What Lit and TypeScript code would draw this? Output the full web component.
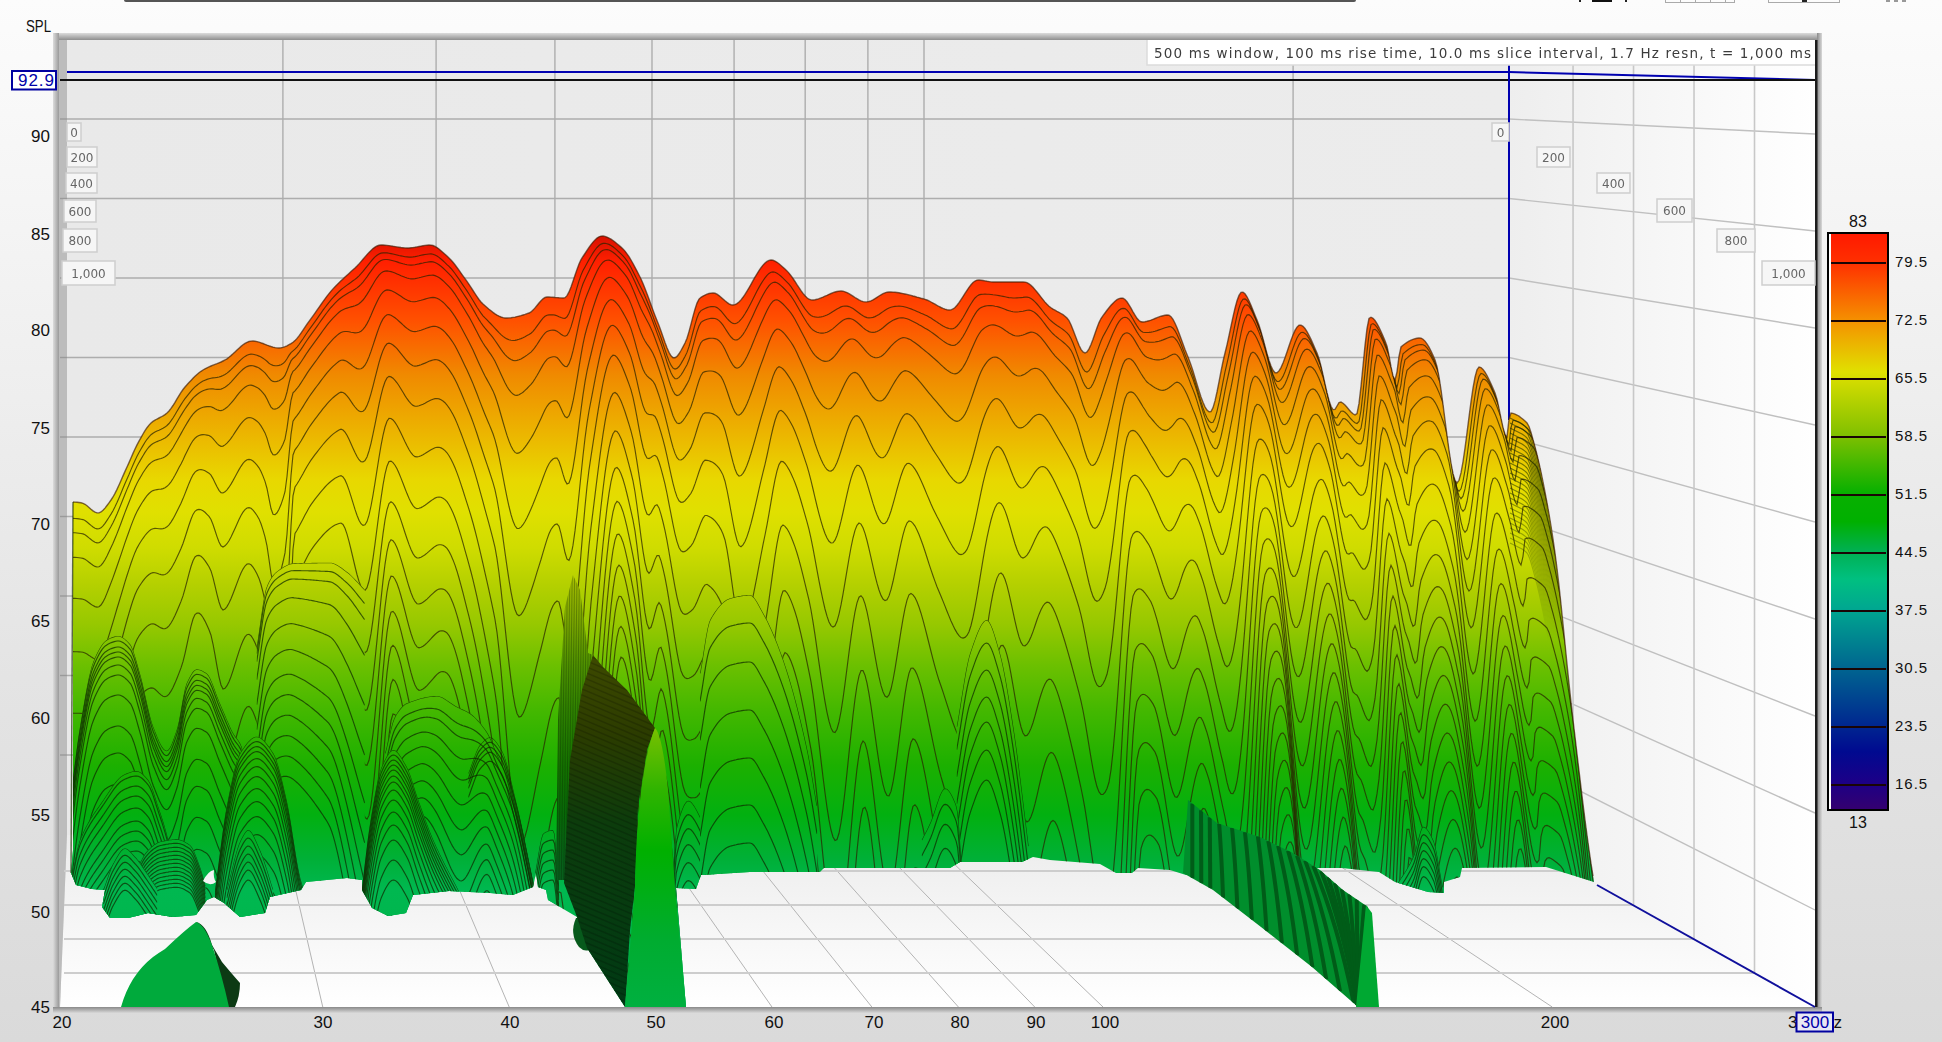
import { LitElement, css, html, svg } from "lit";
import { customElement } from "lit/decorators.js";

type Pt = [number, number];

// ridge of the first slice, read off the reference
const RIDGE: Pt[] = [
  [60, 502], [73, 502], [82, 503], [98, 513], [111, 500], [127, 467], [138, 443], [151, 423], [167, 413],
  [185, 387], [203, 370], [225, 360], [252, 341], [279, 348], [292, 343], [310, 320], [332, 290], [355, 268],
  [381, 245], [408, 248], [430, 245], [448, 257], [466, 280], [484, 305], [506, 318], [529, 313], [547, 297],
  [564, 298], [582, 258], [602, 236], [622, 248], [640, 277], [658, 323], [674, 358], [685, 343], [700, 298],
  [713, 293], [733, 305], [771, 260], [786, 270], [812, 300], [841, 291], [866, 302], [889, 292], [924, 299],
  [950, 310], [978, 280], [993, 282], [1024, 282], [1050, 307], [1067, 318], [1085, 353], [1102, 317],
  [1122, 298], [1142, 322], [1168, 315], [1188, 357], [1210, 412], [1225, 353], [1242, 292], [1257, 320],
  [1276, 373], [1300, 325], [1317, 353], [1334, 410], [1340, 402], [1356, 415], [1370, 317], [1386, 343],
  [1395, 380], [1401, 347], [1420, 338], [1435, 360], [1457, 483], [1479, 367], [1495, 393], [1507, 437],
  [1510, 413], [1527, 423], [1535, 447], [1544, 487], [1555, 553], [1573, 720], [1594, 882], [1620, 1000],
];

// how fast each frequency falls away from the ridge
const DECAY: Pt[] = [
  [60, 2], [73, 2.05], [98, 2], [118, 1.6], [136, 1.4], [150, 1.45], [166, 1.55], [180, 1.5], [194, 1.3],
  [208, 1.45], [222, 1.8], [245, 1.6], [256, 1.7], [264, 1.9], [272, 2.3], [283, 2], [292, 1.05], [310, 1],
  [337, 1.05], [362, 1.45], [386, 0.95], [413, 1.15], [440, 1.1], [462, 1.25], [490, 1.7], [515, 2.9], [535, 2.5],
  [553, 2.2], [564, 2.55], [585, 1.5], [609, 0.85], [625, 1], [640, 1.3], [652, 1.1], [675, 1.4], [690, 1.5],
  [717, 1.75], [735, 2.35], [758, 1.9], [775, 1.45], [800, 1.7], [826, 2.4], [852, 1.65], [878, 2.2], [901, 1.65],
  [930, 2.1], [958, 2.4], [990, 1.6], [1013, 2], [1039, 1.7], [1070, 2.1], [1096, 2.5], [1120, 1.3],
  [1136, 1.25], [1159, 1.55], [1185, 1.2], [1205, 1.3], [1220, 1.5], [1245, 0.8], [1254, 0.75], [1283, 1.15],
  [1310, 0.8], [1335, 1.05], [1349, 1.15], [1369, 0.8], [1385, 0.95], [1415, 0.8], [1440, 0.95], [1457, 1.05],
  [1481, 0.8], [1500, 0.95], [1515, 0.9], [1620, 0.9],
];

const FLOOR_EDGE: Pt[] = [
  [71, 873], [76, 885], [92, 889], [105, 890], [102, 907], [110, 918], [128, 918], [148, 913], [173, 917],
  [196, 915], [207, 900], [214, 897], [224, 903], [240, 917], [265, 913], [270, 897], [301, 890], [306, 882],
  [347, 878], [362, 880], [362, 890], [372, 908], [388, 916], [406, 913], [413, 895], [449, 891], [490, 893],
  [513, 895], [533, 887], [536, 873], [538, 887], [546, 890], [548, 900], [577, 917], [587, 948], [625, 1007],
  [686, 1007], [676, 888], [696, 889], [701, 875], [750, 872], [820, 872], [824, 868], [950, 868], [960, 862],
  [1022, 862], [1033, 857], [1050, 860], [1100, 864], [1116, 873], [1132, 873], [1138, 868], [1170, 870],
  [1186, 875], [1315, 868], [1342, 868], [1379, 872], [1395, 882], [1428, 892], [1444, 893], [1444, 882],
  [1460, 877], [1462, 868], [1546, 867], [1594, 882],
];

const dropTable = () => {
  const d = [0, 8, 15, 27, 47, 73, 103, 138, 182, 227, 270, 310, 348, 385];
  while (d.length < 36) d.push(d[d.length - 1] + 36);
  return d;
};

// monotone cubic through the points, so peaks stay round and nothing overshoots
function curve(pts: Pt[]) {
  const n = pts.length;
  const slope = (i: number) => (pts[i + 1][1] - pts[i][1]) / (pts[i + 1][0] - pts[i][0]);
  const tan = pts.map((_, i) => {
    if (i === 0) return slope(0);
    if (i === n - 1) return slope(n - 2);
    const a = slope(i - 1);
    const b = slope(i);
    return a * b <= 0 ? 0 : (2 * a * b) / (a + b);
  });
  return (x: number) => {
    if (x <= pts[0][0]) return pts[0][1];
    if (x >= pts[n - 1][0]) return pts[n - 1][1];
    let i = 0;
    while (pts[i + 1][0] < x) i++;
    const h = pts[i + 1][0] - pts[i][0];
    const t = (x - pts[i][0]) / h;
    const t2 = t * t;
    const t3 = t2 * t;
    return (
      (2 * t3 - 3 * t2 + 1) * pts[i][1] +
      (t3 - 2 * t2 + t) * h * tan[i] +
      (-2 * t3 + 3 * t2) * pts[i + 1][1] +
      (t3 - t2) * h * tan[i + 1]
    );
  };
}

const poly = (pts: Pt[]) => "M" + pts.map((p) => `${p[0].toFixed(1)} ${p[1].toFixed(1)}`).join("L");

// crop coordinates to page coordinates
const crop = (ox: number, oy: number, pts: Pt[]): Pt[] => pts.map((p) => [ox + p[0] / 3, oy + p[1] / 3]);

interface Mound {
  top: Pt[];
  drops: number[];
  fill?: boolean;
  rate?: Pt[];
  fade?: boolean;
  opacity?: number;
}

const CROP_A = (pts: Pt[]) => crop(60, 540, pts);
const CROP_B = (pts: Pt[]) => crop(560, 540, pts);
const CROP_C = (pts: Pt[]) => crop(1060, 540, pts);

const slabDrops = Array.from({ length: 26 }, (_, i) => (i + 1) * 5);

const MOUNDS: Mound[] = [
  // shoulder that leans to the right above 30 Hz
  {
    top: CROP_A([[590, 320], [620, 140], [650, 95], [700, 70], [810, 68], [860, 95], [915, 150]]),
    drops: [0, 7, 15, 33, 58, 83, 107, 127, 147, 167, 187, 207],
    rate: [[260, 1], [273, 1], [327, 1.25], [365, 2]],
  },
  {
    top: CROP_A([[28, 800], [60, 560], [100, 365], [140, 300], [175, 288], [210, 312], [240, 400], [280, 560], [320, 632], [350, 570], [380, 430], [410, 388], [440, 400], [480, 490], [520, 580], [545, 620], [570, 800], [590, 1050]]),
    drops: [0, 5, 11, 16, 21, 29, 39, 59, 90, 117, 148, 180, 215],
  },
  {
    top: CROP_A([[975, 640], [1005, 530], [1040, 490], [1130, 468], [1190, 500], [1230, 520], [1280, 575], [1310, 640], [1360, 760], [1425, 1050]]),
    drops: [0, 13, 23, 40, 57, 77, 97, 117, 138, 157, 175, 195],
    rate: [[385, 1], [420, 0.85], [460, 1.25], [490, 0.8], [535, 1]],
  },
  { top: CROP_A([[1225, 700], [1260, 615], [1290, 592], [1325, 630], [1370, 790], [1425, 1050]]), drops: [0, 5, 10, 15, 24], fill: false },
  { top: CROP_A([[905, 1050], [930, 850], [965, 680], [1000, 630], [1040, 680], [1075, 780], [1120, 900], [1200, 1060]]), drops: [0, 5, 10, 15, 20, 26, 32, 40, 50, 62, 75, 90, 110, 130] },
  { top: CROP_A([[465, 1050], [500, 800], [540, 640], [590, 590], [640, 640], [680, 780], [720, 1010], [735, 1060]]), drops: [0, 5, 10, 15, 22, 30, 40, 52, 65, 80, 98, 118, 140] },
  { top: CROP_A([[500, 1050], [540, 905], [565, 870], [600, 930], [640, 1050]]), drops: [0, 8, 16, 24, 32, 40, 50] },
  { top: CROP_A([[1425, 1000], [1450, 880], [1480, 870], [1500, 1050]]), drops: [0, 10, 20, 30, 40, 50] },
  { top: CROP_A([[28, 1050], [60, 900], [130, 780], [190, 705], [230, 693], [265, 720], [295, 800], [325, 900], [350, 1050]]), drops: [0, 5, 15, 25, 37, 50, 60, 70, 80, 90, 100, 108, 115] },
  { top: CROP_A([[225, 1000], [260, 935], [300, 905], [350, 898], [390, 915], [420, 980], [440, 1050]]), drops: [0, 4, 8, 12, 16, 20, 24, 28, 32, 36, 40, 44, 48] },
  { top: CROP_A([[130, 1050], [160, 970], [195, 925], [225, 950], [265, 1005], [295, 1050]]), drops: [0, 7, 14, 21, 28, 35, 42] },
  { top: CROP_B([[335, 1050], [350, 860], [385, 782], [420, 830], [470, 1000], [480, 1050]]), drops: [0, 14, 28, 44, 62, 80] },
  // nested arches near 70 Hz and 100 Hz
  { top: CROP_B([[420, 400], [450, 240], [510, 175], [570, 165], [610, 220], [670, 360], [740, 620], [775, 820]]), drops: [0, 28, 67, 115, 163, 210, 248] },
  { top: CROP_B([[1190, 560], [1230, 340], [1280, 240], [1320, 340], [1360, 560], [1410, 950]]), drops: [0, 23, 50, 77, 102, 130, 160] },
  { top: CROP_B([[1085, 900], [1110, 850], [1155, 745], [1190, 800], [1210, 1050]]), drops: [0, 16, 36, 60, 85, 110, 130] },
  { top: CROP_C([[1000, 1050], [1060, 950], [1090, 860], [1120, 900], [1150, 1050]]), drops: [0, 8, 16, 24, 32, 40, 50] },
  // steep last block at the top of the range, dark where its slices crowd together
  { top: [[1510, 413], [1518, 417], [1527, 423], [1535, 447], [1544, 487], [1555, 553], [1573, 720]], drops: slabDrops, fill: false, fade: true, opacity: 0.55 },
];

const SURFACE_STOPS: [number, string][] = [
  [236, "#d81000"], [262, "#ff2000"], [320, "#ff5000"], [375, "#f08a00"], [432, "#ecb400"], [480, "#e8d800"],
  [512, "#e0e000"], [548, "#cfdc00"], [585, "#b4d000"], [625, "#96c800"], [665, "#6cc000"], [710, "#44b800"],
  [765, "#1cb000"], [815, "#02b010"], [860, "#00b038"], [890, "#00b850"], [1007, "#00b048"],
];

const LEGEND_STOPS = [
  "#ff1a00 0%", "#ff3000 5%", "#f59000 15%", "#e0e000 24%", "#80c000 35%", "#08b000 45%", "#00b000 50%",
  "#00b050 55%", "#00c080 60%", "#00a890 65%", "#006890 75%", "#002a90 85%", "#000a90 90%", "#1a0088 95%",
  "#340070 100%",
];

const FREQS = [20, 30, 40, 50, 60, 70, 80, 90, 100, 200, 300];
const LEFT = 67;
const BACK_RIGHT = 1509;
const RIGHT = 1815;
const BACK_FLOOR = 835;
const BOTTOM = 1007;
const backX = (f: number) => LEFT + (1442 * Math.log10(f / 20)) / Math.log10(15);
const frontX = (f: number) => 60 + (1755 * Math.log10(f / 20)) / Math.log10(15);

const DB = [90, 85, 80, 75, 70, 65, 60, 55, 50];
const backY = (v: number) => 119 + (90 - v) * 15.9;
const frontY = (v: number) => BOTTOM - (v - 45) * 19.4;

const AXIS_Y: [string, number][] = [
  ["90", 136], ["85", 234], ["80", 330], ["75", 428], ["70", 524], ["65", 621], ["60", 718], ["55", 815], ["50", 912], ["45", 1007],
];
const AXIS_X: [string, number][] = [
  ["20", 62], ["30", 323], ["40", 510], ["50", 656], ["60", 774], ["70", 874], ["80", 960], ["90", 1036], ["100", 1105], ["200", 1555],
];

const DEPTH_LEFT: [string, number, number, number, number][] = [
  ["0", 67, 123, 14, 18], ["200", 67, 147, 30, 20], ["400", 66, 173, 31, 20], ["600", 64, 200, 32, 22],
  ["800", 63, 229, 34, 23], ["1,000", 62, 261, 53, 24],
];
const DEPTH_RIGHT: [string, number, number, number, number][] = [
  ["0", 1492, 123, 17, 18], ["200", 1537, 147, 33, 20], ["400", 1597, 173, 33, 20], ["600", 1657, 199, 35, 23],
  ["800", 1717, 229, 38, 23], ["1,000", 1762, 261, 53, 24],
];

const LEGEND_TICKS = ["79.5", "72.5", "65.5", "58.5", "51.5", "44.5", "37.5", "30.5", "23.5", "16.5"];

@customElement("app-root")
export class AppRoot extends LitElement {
  static styles = css`
    :host {
      display: flex;
      flex-direction: column;
      width: 1942px;
      height: 1042px;
      overflow: hidden;
      background: linear-gradient(180deg, #fcfcfc 0%, #f4f4f4 22%, #e4e4e4 65%, #dadada 100%);
      font-family: "Liberation Sans", Arial, sans-serif;
    }

    .strip {
      display: flex;
      height: 4px;
      flex: none;
      overflow: hidden;
    }
    .strip .bar {
      width: 1232px;
      height: 2px;
      margin-left: 124px;
      background: #555;
      border-radius: 0 0 3px 3px;
    }
    .strip .mark {
      width: 2px;
      height: 2px;
      margin-left: 223px;
      background: #222;
    }
    .strip .knob {
      width: 20px;
      height: 2px;
      margin-left: 11px;
      background: #111;
    }
    .strip .mark.end {
      margin-left: 13px;
    }
    .strip .seg {
      display: flex;
      width: 70px;
      height: 3px;
      margin-left: 38px;
      border: 1px solid #aaa;
      border-top: 0;
      box-sizing: border-box;
    }
    .strip .seg i {
      width: 14px;
      border-right: 1px solid #aaa;
    }
    .strip .select {
      display: flex;
      justify-content: center;
      width: 72px;
      height: 3px;
      margin-left: 33px;
      border: 1px solid #aaa;
      border-top: 0;
      box-sizing: border-box;
    }
    .strip .select i {
      width: 5px;
      height: 2px;
      background: #222;
    }
    .strip .gear {
      width: 22px;
      height: 2px;
      margin-left: 46px;
      background: repeating-linear-gradient(90deg, #999 0 4px, transparent 4px 8px);
    }

    .main {
      display: grid;
      grid-template-columns: 1827px 115px;
      flex: 1;
    }

    svg {
      display: block;
      overflow: visible;
    }
    .soft {
      filter: blur(0.45px);
    }
    text {
      font-family: "Liberation Sans", Arial, sans-serif;
      font-size: 17px;
      fill: #111;
    }
    .spl {
      font-size: 16px;
    }
    .title {
      font-family: "DejaVu Sans", sans-serif;
      font-size: 13.5px;
      fill: #3c3c3c;
    }
    .depth {
      font-family: "DejaVu Sans", sans-serif;
      font-size: 12px;
      fill: #666;
    }
    .cursor {
      fill: #0000a8;
    }

    .legend {
      display: flex;
      flex-direction: column;
      padding-top: 208px;
      font-size: 16px;
      color: #111;
    }
    .limit {
      width: 62px;
      height: 20px;
      line-height: 20px;
      text-align: center;
    }
    .scale {
      display: flex;
    }
    .ramp {
      display: flex;
      flex-direction: column;
      width: 62px;
      height: 579px;
      box-sizing: border-box;
      border: 2px solid #000;
      box-shadow: inset 2px 0 0 #fff;
    }
    .ramp span {
      display: block;
      height: 58px;
      margin: 0 1px 0 2px;
      box-sizing: border-box;
      border-bottom: 2px solid #1a0505;
      flex: none;
    }
    .ramp span.first {
      height: 30px;
    }
    .values {
      display: flex;
      flex-direction: column;
      padding: 1px 0 0 6px;
      letter-spacing: 1px;
      font-size: 15px;
    }
    .values span {
      height: 58px;
      line-height: 58px;
      flex: none;
    }
  `;

  private surfaceDefs() {
    const top = 230;
    const span = BOTTOM - top;
    return svg`
      <linearGradient id="surface" gradientUnits="userSpaceOnUse" x1="0" y1="${top}" x2="0" y2="${BOTTOM}">
        ${SURFACE_STOPS.map(([y, c]) => svg`<stop offset="${(y - top) / span}" stop-color="${c}"></stop>`)}
      </linearGradient>
      <linearGradient id="backwall" x1="0" y1="0" x2="1" y2="0">
        <stop offset="0" stop-color="#e9e9e9"></stop>
        <stop offset="1" stop-color="#ececec"></stop>
      </linearGradient>
      <linearGradient id="sidewall" x1="0" y1="0" x2="1" y2="0">
        <stop offset="0" stop-color="#eeeeee"></stop>
        <stop offset="1" stop-color="#ffffff"></stop>
      </linearGradient>
      <linearGradient id="floor" x1="0" y1="0" x2="0" y2="1">
        <stop offset="0" stop-color="#ececec"></stop>
        <stop offset="1" stop-color="#ffffff"></stop>
      </linearGradient>
      <linearGradient id="frameTop" x1="0" y1="0" x2="0" y2="1">
        <stop offset="0" stop-color="#dcdcdc"></stop>
        <stop offset="1" stop-color="#8e8e8e"></stop>
      </linearGradient>
      <linearGradient id="frameLeft" x1="0" y1="0" x2="1" y2="0">
        <stop offset="0" stop-color="#dcdcdc"></stop>
        <stop offset="1" stop-color="#9a9a9a"></stop>
      </linearGradient>
      <linearGradient id="frameRight" x1="0" y1="0" x2="1" y2="0">
        <stop offset="0" stop-color="#8a8a8a"></stop>
        <stop offset="1" stop-color="#d8d8d8"></stop>
      </linearGradient>
      <linearGradient id="frameBottom" x1="0" y1="0" x2="0" y2="1">
        <stop offset="0" stop-color="#8a8a8a"></stop>
        <stop offset="1" stop-color="#d8d8d8"></stop>
      </linearGradient>
      <linearGradient id="slab" gradientUnits="userSpaceOnUse" x1="0" y1="655" x2="0" y2="1007">
        <stop offset="0" stop-color="#3e4a00"></stop>
        <stop offset="0.22" stop-color="#2c3c00"></stop>
        <stop offset="0.48" stop-color="#0c3c0c"></stop>
        <stop offset="1" stop-color="#003a14"></stop>
      </linearGradient>
      <linearGradient id="spireShade" gradientUnits="userSpaceOnUse" x1="0" y1="575" x2="0" y2="880">
        <stop offset="0" stop-color="#0c2400" stop-opacity="0.12"></stop>
        <stop offset="0.3" stop-color="#0c2400" stop-opacity="0.3"></stop>
        <stop offset="1" stop-color="#0c2400" stop-opacity="0.6"></stop>
      </linearGradient>
      <linearGradient id="lime" gradientUnits="userSpaceOnUse" x1="0" y1="728" x2="0" y2="1007">
        <stop offset="0" stop-color="#78c000"></stop>
        <stop offset="0.22" stop-color="#30b400"></stop>
        <stop offset="0.44" stop-color="#00b000"></stop>
        <stop offset="0.76" stop-color="#00ac30"></stop>
        <stop offset="1" stop-color="#00b040"></stop>
      </linearGradient>
      <linearGradient id="fadeRamp" gradientUnits="userSpaceOnUse" x1="0" y1="470" x2="0" y2="640">
        <stop offset="0" stop-color="#fff"></stop>
        <stop offset="1" stop-color="#000"></stop>
      </linearGradient>
      <mask id="fadeOut" maskUnits="userSpaceOnUse" x="1480" y="380" width="140" height="300">
        <rect x="1480" y="380" width="140" height="300" fill="url(#fadeRamp)"></rect>
      </mask>
    `;
  }

  private room() {
    const floorRows = [871, 905, 939, 973];
    const blueX = (y: number) => BACK_RIGHT + ((y - BACK_FLOOR) / (BOTTOM - BACK_FLOOR)) * (RIGHT - BACK_RIGHT);
    return svg`
      <rect x="53" y="33" width="1769" height="7" fill="url(#frameTop)"></rect>
      <rect x="53" y="33" width="6" height="980" fill="url(#frameLeft)"></rect>
      <rect x="1817" y="33" width="5" height="980" fill="url(#frameRight)"></rect>
      <rect x="53" y="1007" width="1769" height="6" fill="url(#frameBottom)"></rect>

      <path d="M${LEFT} 40H${BACK_RIGHT}V${BACK_FLOOR}H${LEFT}Z" fill="url(#backwall)"></path>
      <path d="M${BACK_RIGHT} 40H${RIGHT}V${BOTTOM}L${BACK_RIGHT} ${BACK_FLOOR}Z" fill="url(#sidewall)"></path>
      <path d="M${LEFT} ${BACK_FLOOR}H${BACK_RIGHT}L${RIGHT} ${BOTTOM}H60Z" fill="url(#floor)"></path>
      <path d="M59 40H${LEFT}V${BACK_FLOOR}L60 ${BOTTOM}H59Z" fill="#bcbcbc"></path>

      ${DB.map((v) => svg`
        <path d="M${LEFT} ${backY(v)}H${BACK_RIGHT}" stroke="#adadad" stroke-width="1.6"></path>
        <path d="M${BACK_RIGHT} ${backY(v)}L${RIGHT} ${frontY(v)}" stroke="#c0c0c0" stroke-width="1.4"></path>
        <path d="M60 ${backY(v)}H${LEFT}" stroke="#9a9a9a" stroke-width="1.4"></path>
      `)}
      ${FREQS.slice(1, -1).map((f) => svg`
        <path d="M${backX(f)} 40V${BACK_FLOOR}" stroke="#adadad" stroke-width="1.4"></path>
        <path d="M${backX(f)} ${BACK_FLOOR}L${frontX(f)} ${BOTTOM}" stroke="#b4b4b4" stroke-width="1"></path>
      `)}
      ${floorRows.map((y) => svg`
        <path d="M64 ${y}H${blueX(y)}" stroke="#cdcdcd" stroke-width="2"></path>
        <path d="M${blueX(y)} 65V${y}" stroke="#c8c8c8" stroke-width="1.6"></path>
      `)}

      <path d="M${LEFT} 72H${BACK_RIGHT}L${RIGHT} 80" stroke="#0000b0" stroke-width="2" fill="none"></path>
      <path d="M60 80H${RIGHT}" stroke="#111" stroke-width="2"></path>
      <path d="M${BACK_RIGHT} 65V420" stroke="#0000b0" stroke-width="2"></path>
      <path d="M1597 885L${RIGHT} ${BOTTOM}" stroke="#10109c" stroke-width="2"></path>
      <rect x="1815" y="40" width="2.5" height="967" fill="#1c1c1c"></rect>

      <rect x="1147" y="40" width="668" height="25" fill="#ffffff"></rect>
      <path d="M1147 40V65H1815" fill="none" stroke="#dcdcdc" stroke-width="1.5"></path>
      <text class="title soft" x="1154" y="57.5" textLength="657" lengthAdjust="spacing">500 ms window, 100 ms rise time, 10.0 ms slice interval, 1.7 Hz resn, t = 1,000 ms</text>

      ${[...DEPTH_LEFT, ...DEPTH_RIGHT].map(([t, x, y, w, h]) => svg`
        <rect x="${x}" y="${y}" width="${w}" height="${h}" fill="#f6f6f6" stroke="#cecece" stroke-width="1.5"></rect>
        <text class="depth soft" x="${x + w / 2}" y="${y + h / 2 + 4.5}" text-anchor="middle">${t}</text>
      `)}
    `;
  }

  private surface() {
    const ridge = curve(RIDGE);
    const decay = curve(DECAY);
    const drops = dropTable();

    const outline: Pt[] = [];
    for (let x = 73; x <= 1594; x += 2) outline.push([x, ridge(x)]);
    const silhouette = poly([...outline, ...[...FLOOR_EDGE].reverse(), [73, 850]]) + "Z";

    const lines = drops.slice(1).map((d, i) => {
      // later slices sit further into the room, so they spread to the right
      const depth = (0.25 * (i + 1)) / drops.length;
      const pts: Pt[] = [];
      for (let x = 71; x <= 1610; x += 2) {
        const u = LEFT + (x - LEFT) / (1 + 0.212 * depth);
        pts.push([x, Math.min(1015, ridge(u) + d * decay(u))]);
      }
      return poly(pts);
    });

    const mounds = MOUNDS.map((m, idx) => {
      const top = curve(m.top);
      const rate = m.rate ? curve(m.rate) : () => 1;
      const x0 = m.top[0][0];
      const x1 = m.top[m.top.length - 1][0];
      const run = (d: number) => {
        const pts: Pt[] = [];
        for (let x = x0; x <= x1; x += 1.5) pts.push([x, top(x) + d * rate(x)]);
        return pts;
      };
      const area = poly([...run(0), [x1, 1020], [x0, 1020]]) + "Z";
      return svg`
        <clipPath id="mound${idx}"><path d="${area}"></path></clipPath>
        ${m.fill === false ? null : svg`<path d="${area}" fill="url(#surface)"></path>`}
        <g mask="${m.fade ? "url(#fadeOut)" : "none"}">
          <g clip-path="url(#mound${idx})">
            ${m.drops.map((d) => svg`<path d="${poly(run(d))}" fill="none" stroke="#0f2a00" stroke-opacity="${m.opacity ?? 0.72}" stroke-width="1.15"></path>`)}
          </g>
        </g>
      `;
    });

    return svg`
      <clipPath id="body"><path d="${silhouette}"></path></clipPath>
      <g class="soft">
        <path d="${silhouette}" fill="url(#surface)"></path>
        <g clip-path="url(#body)">
          ${lines.map((d) => svg`<path d="${d}" fill="none" stroke="#2a2400" stroke-opacity="0.72" stroke-width="1.15"></path>`)}
          ${mounds}
        </g>
        <path d="${poly(outline)}" fill="none" stroke="#3a1800" stroke-opacity="0.65" stroke-width="1.4"></path>
        <path d="M73 502L71 873" stroke="#1c3000" stroke-opacity="0.7" stroke-width="1.4"></path>
        <path d="M203 881Q208 871 214 870Q213 878 216 882Q210 887 203 881Z" fill="#f4f4f4"></path>
        ${this.leftSlab()}
        ${this.rightSlab()}
        ${this.blob()}
      </g>
    `;
  }

  // dark wall behind the bright ridge near 50 Hz
  private leftSlab() {
    const spire: Pt[] = [[556, 880], [558, 720], [565, 607], [573, 575], [580, 590], [588, 653], [593, 655], [590, 720], [582, 880]];
    const body: Pt[] = [[564, 883], [570, 760], [582, 690], [593, 655], [603, 667], [627, 690], [655, 728], [647, 750], [638, 807], [635, 887], [630, 930], [625, 1007], [587, 948], [577, 917]];
    const ticks: number[] = [];
    for (let x = 558; x < 592; x += 2.4) ticks.push(x);
    const hatch: number[] = [];
    for (let y = 600; y < 1020; y += 6) hatch.push(y);
    return svg`
      <clipPath id="spire"><path d="${poly(spire)}Z"></path></clipPath>
      <clipPath id="wall"><path d="${poly(body)}Z"></path></clipPath>
      <path d="${poly(spire)}Z" fill="url(#surface)"></path>
      <path d="${poly(spire)}Z" fill="url(#spireShade)"></path>
      <g clip-path="url(#spire)">
        ${ticks.map((x) => svg`<path d="M${x} 560L${x - 4} 890" stroke="#0a2000" stroke-opacity="0.3" stroke-width="1"></path>`)}
      </g>
      <path d="M576 918Q569 934 579 947Q584 952 589 950L580 918Z" fill="#075a1c"></path>
      <path d="${poly(body)}Z" fill="url(#slab)"></path>
      <g clip-path="url(#wall)">
        ${hatch.map((y) => svg`<path d="M556 ${y}L660 ${y + 44}" stroke="#000" stroke-opacity="0.18" stroke-width="1.4"></path>`)}
      </g>
      <path d="M655 728C661 734 665 760 668 790L675 887L686 1007H625L635 887C636 840 640 766 655 728Z" fill="url(#lime)"></path>
    `;
  }

  // striped wedge running to the front of the room near 150 Hz
  private rightSlab() {
    const topEdge: Pt[] = [[1188, 800], [1217, 823], [1260, 837], [1293, 853], [1320, 870], [1343, 890], [1368, 907]];
    const lowEdge: Pt[] = [[1183, 873], [1213, 890], [1261, 927], [1312, 967], [1358, 1007]];
    const wedge: Pt[] = [...topEdge, ...[...lowEdge].reverse()];
    const face: Pt[] = [[1366, 905], [1372, 913], [1379, 1007], [1356, 1007]];
    const along = (edge: Pt[], s: number): Pt => {
      const f = Math.min(0.999, s) * (edge.length - 1);
      const i = Math.floor(f);
      const t = f - i;
      return [edge[i][0] + (edge[i + 1][0] - edge[i][0]) * t, edge[i][1] + (edge[i + 1][1] - edge[i][1]) * t];
    };
    const stripes: string[] = [];
    for (let n = 0; n < 20; n++) {
      const s = (n + 0.5) / 20;
      const a = along(topEdge, s);
      const b = along(lowEdge, Math.min(1, 0.04 + s * 1.5));
      const mid: Pt = [a[0] + (b[0] - a[0]) * 0.6, a[1] + (b[1] - a[1]) * 0.42];
      stripes.push(`M${a[0]} ${a[1]}Q${mid[0]} ${mid[1]} ${b[0]} ${b[1]}`);
    }
    return svg`
      <clipPath id="wedge"><path d="${poly(wedge)}Z"></path></clipPath>
      <path d="${poly(wedge)}Z" fill="#008e2c"></path>
      <g clip-path="url(#wedge)">
        ${stripes.map((d) => svg`<path d="${d}" fill="none" stroke="#005c18" stroke-width="4"></path>`)}
      </g>
      <path d="${poly(face)}Z" fill="#00a832"></path>
    `;
  }

  private blob() {
    return svg`
      <path d="M196 922Q206 924 212 945L222 962Q232 974 240 983Q240 996 235 1007H226L214 950Z" fill="#0c3a14"></path>
      <path d="M121 1007Q130 975 153 957Q160 952 165 949Q185 930 196 922Q204 924 212 945Q222 975 229 1007Z" fill="#00aa3c"></path>
    `;
  }

  private axes() {
    return svg`
      <text class="spl" x="26" y="32" textLength="25" lengthAdjust="spacingAndGlyphs">SPL</text>
      ${AXIS_Y.map(([t, y]) => svg`<text x="50" y="${y + 6}" text-anchor="end">${t}</text>`)}
      ${AXIS_X.map(([t, x]) => svg`<text x="${x}" y="1028" text-anchor="middle">${t}</text>`)}

      <rect x="12" y="71" width="44" height="18.5" fill="#fff" stroke="#0000a0" stroke-width="2"></rect>
      <text class="cursor" x="18" y="86" textLength="36">92.9</text>

      <text x="1815" y="1028" text-anchor="middle">300 Hz</text>
      <rect x="1796.5" y="1012.5" width="36.5" height="19" fill="#e8e8f4" stroke="#0000a0" stroke-width="2"></rect>
      <text class="cursor" x="1815" y="1028" text-anchor="middle">300</text>
    `;
  }

  render() {
    return html`
      <div class="strip">
        <div class="bar"></div>
        <div class="mark"></div>
        <div class="knob"></div>
        <div class="mark end"></div>
        <div class="seg"><i></i><i></i><i></i><i></i></div>
        <div class="select"><i></i></div>
        <div class="gear"></div>
      </div>
      <div class="main">
        <svg width="1827" height="1038" viewBox="0 4 1827 1038">
          <defs>${this.surfaceDefs()}</defs>
          ${this.room()} ${this.surface()} ${this.axes()}
        </svg>
        <div class="legend">
          <div class="limit">83</div>
          <div class="scale">
            <div class="ramp" style="background:linear-gradient(180deg, ${LEGEND_STOPS.join(", ")})">
              <span class="first"></span>
              ${LEGEND_TICKS.slice(1).map(() => html`<span></span>`)}
            </div>
            <div class="values">${LEGEND_TICKS.map((t) => html`<span>${t}</span>`)}</div>
          </div>
          <div class="limit">13</div>
        </div>
      </div>
    `;
  }
}
